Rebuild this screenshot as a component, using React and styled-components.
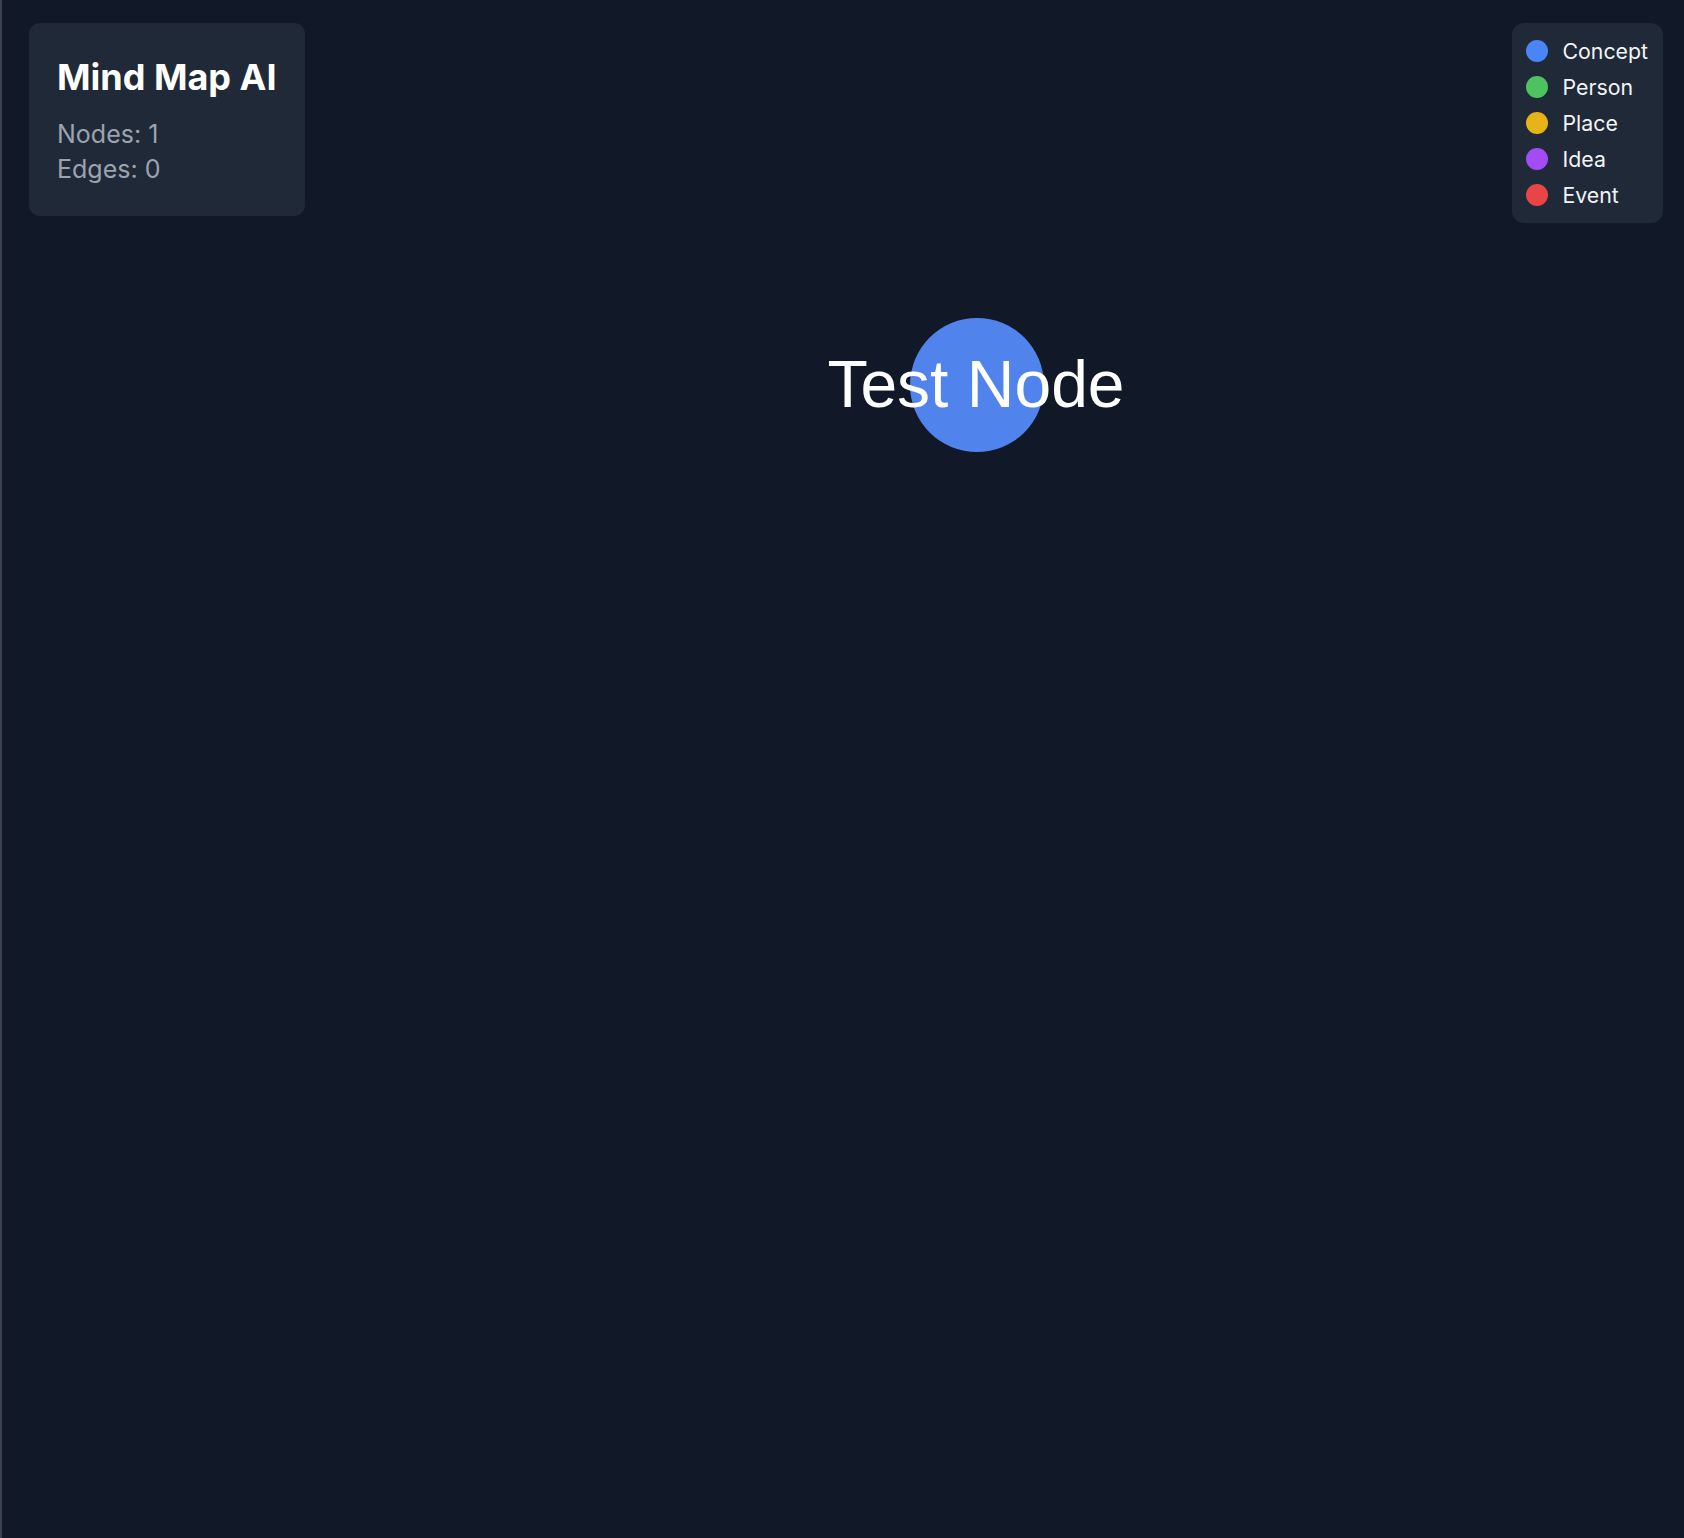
import React from 'react';
import styled, { createGlobalStyle } from 'styled-components';

const GlobalStyle = createGlobalStyle`
  html, body {
    margin: 0;
    padding: 0;
    background: #111827;
  }
  #root {
    height: 100vh;
  }
`

const types = [
  { label: 'Concept', color: '#4a85f7' },
  { label: 'Person', color: '#4cc35f' },
  { label: 'Place', color: '#e6b319' },
  { label: 'Idea', color: '#a24cf6' },
  { label: 'Event', color: '#e84545' },
]

const nodes = [
  { id: 1, label: 'Test Node', x: 974, y: 385, type: 'Concept' },
]

function App() {
  return (
    <Wrap>
      <GlobalStyle />
      <Canvas width="100%" height="100%">
        {nodes.map(n => (
          <g key={n.id}>
            <circle cx={n.x + 1} cy={n.y} r={67} fill="#5083ec" />
            <text
              x={n.x}
              y={n.y + 22}
              textAnchor="middle"
              fill="#ffffff"
              fontSize="66"
              fontFamily="'Liberation Sans', Arial, sans-serif"
            >
              {n.label}
            </text>
          </g>
        ))}
      </Canvas>

      <Stats>
        <Title>Mind Map AI</Title>
        <StatLine>Nodes: {nodes.length}</StatLine>
        <StatLine>Edges: 0</StatLine>
      </Stats>

      <Legend>
        {types.map(t => (
          <LegendRow key={t.label}>
            <Dot color={t.color} />
            <span>{t.label}</span>
          </LegendRow>
        ))}
      </Legend>
    </Wrap>
  );
}

const Wrap = styled.div`
  position: relative;
  width: 100%;
  height: 100%;
  overflow: hidden;
  background: #111827;
  border-left: 2px solid #3b404c;
  box-sizing: border-box;
  font-family: Inter, 'Liberation Sans', sans-serif;
`

const Canvas = styled.svg`
  position: absolute;
  inset: 0;
  display: block;
`

const Stats = styled.div`
  position: absolute;
  top: 23px;
  left: 27px;
  padding: 30px 28px 29px 28px;
  background: #1f2937;
  border-radius: 11px;
`

const Title = styled.h1`
  margin: 0 0 16px;
  font-size: 36px;
  line-height: 48px;
  font-weight: 700;
  color: #ffffff;
`

const StatLine = styled.div`
  font-size: 25px;
  line-height: 35px;
  color: #9ca3af;
`

const Legend = styled.div`
  position: absolute;
  top: 23px;
  right: 21px;
  padding: 10px 15px 10px 14px;
  background: #1f2937;
  border-radius: 12px;
`

const LegendRow = styled.div`
  display: flex;
  align-items: center;
  gap: 15px;
  height: 36px;
  font-size: 21.3px;
  font-weight: 400;
  color: #f3f4f6;
`

const Dot = styled.span`
  width: 22px;
  height: 22px;
  border-radius: 50%;
  background: ${p => p.color};
  flex-shrink: 0;
`

export default App;
